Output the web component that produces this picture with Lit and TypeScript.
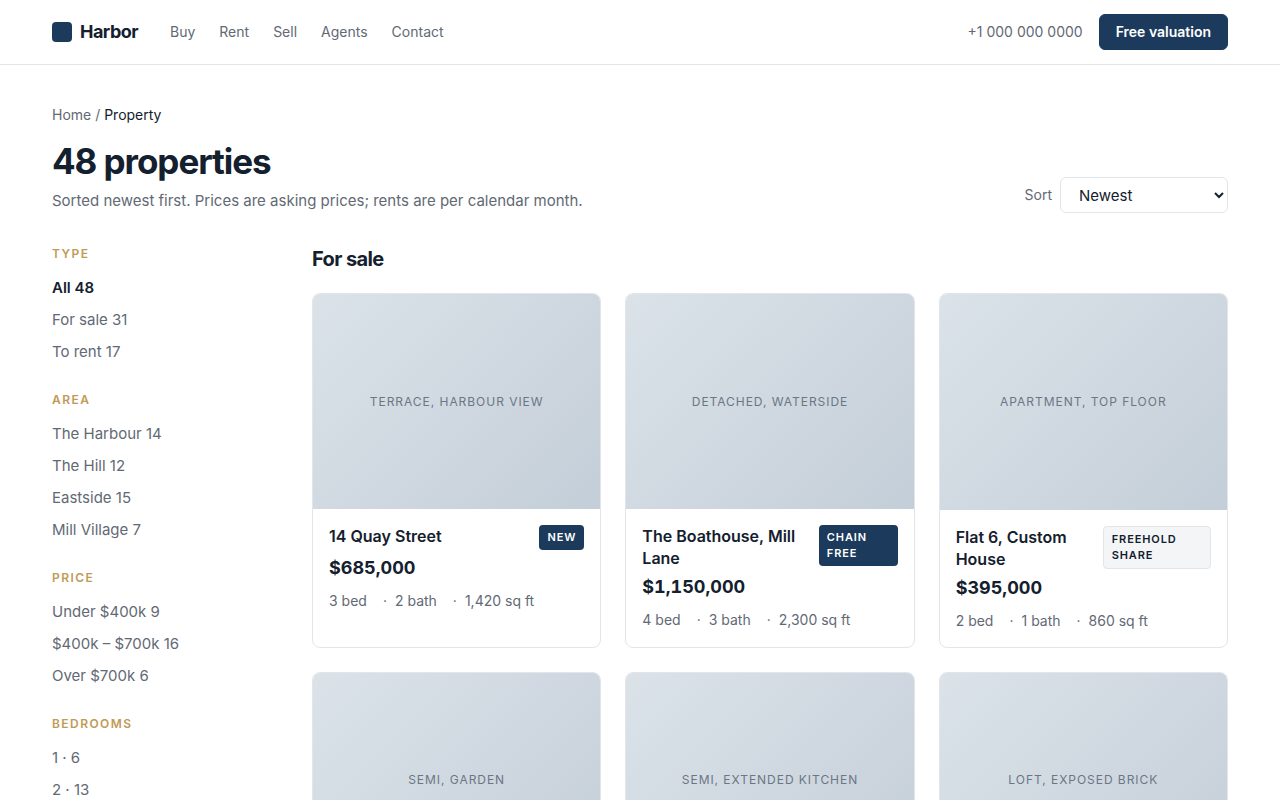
import { LitElement, html, css, nothing } from "lit";
import { customElement, property } from "lit/decorators.js";

interface Listing {
  photo: string;
  title?: string;
  price?: string;
  specs?: string[];
  badge?: string;
  quiet?: boolean;
}

const NAV = ["Buy", "Rent", "Sell", "Agents", "Contact"];

const FILTERS = [
  { name: "Type", items: ["All 48", "For sale 31", "To rent 17"], active: 0 },
  { name: "Area", items: ["The Harbour 14", "The Hill 12", "Eastside 15", "Mill Village 7"], active: -1 },
  { name: "Price", items: ["Under $400k 9", "$400k – $700k 16", "Over $700k 6"], active: -1 },
  { name: "Bedrooms", items: ["1 · 6", "2 · 13"], active: -1 },
];

const LISTINGS: Listing[] = [
  { photo: "Terrace, harbour view", title: "14 Quay Street", price: "$685,000", specs: ["3 bed", "2 bath", "1,420 sq ft"], badge: "New" },
  { photo: "Detached, waterside", title: "The Boathouse, Mill Lane", price: "$1,150,000", specs: ["4 bed", "3 bath", "2,300 sq ft"], badge: "Chain free" },
  { photo: "Apartment, top floor", title: "Flat 6, Custom House", price: "$395,000", specs: ["2 bed", "1 bath", "860 sq ft"], badge: "Freehold share", quiet: true },
  { photo: "Semi, garden" },
  { photo: "Semi, extended kitchen" },
  { photo: "Loft, exposed brick" },
];

@customElement("listing-card")
export class ListingCard extends LitElement {
  @property({ attribute: false }) listing!: Listing;

  static styles = css`
    :host {
      display: flex;
      flex-direction: column;
      overflow: hidden;
      border: 1px solid #e2e5e9;
      border-radius: 8px;
      background: #fff;
    }
    .photo {
      display: grid;
      place-items: center;
      aspect-ratio: 4 / 3;
      background: linear-gradient(135deg, #dbe3e9, #c4ced8);
      color: #6b7684;
      font-size: 12px;
      line-height: 18px;
      letter-spacing: 0.08em;
      text-transform: uppercase;
    }
    .body {
      padding: 16px;
    }
    .top {
      display: flex;
      justify-content: space-between;
      align-items: flex-start;
      gap: 12px;
    }
    .title {
      margin: 0;
      font-size: 16px;
      line-height: 22px;
      font-weight: 600;
    }
    .badge {
      padding: 4px 8px 5px;
      border-radius: 4px;
      background: #1b3a5c;
      color: #fff;
      font-size: 11px;
      line-height: 16px;
      font-weight: 600;
      letter-spacing: 0.08em;
      text-transform: uppercase;
    }
    .quiet {
      border: 1px solid #e2e5e9;
      background: #f3f5f7;
      color: #14202e;
    }
    .price {
      margin: 4px 0 0;
      font-size: 18px;
      line-height: 28px;
      font-weight: 700;
      font-variant-numeric: tabular-nums;
    }
    .specs {
      display: flex;
      gap: 16px;
      margin: 8px 0 0;
      padding: 0;
      list-style: none;
      color: #626974;
      font-size: 14px;
      line-height: 21px;
    }
    .spec + .spec::before {
      content: "·";
      margin-right: 8px;
    }
  `;

  render() {
    const l = this.listing;
    return html`
      <div class="photo">${l.photo}</div>
      ${l.title
        ? html`<div class="body">
            <div class="top">
              <h3 class="title">${l.title}</h3>
              <span class="badge ${l.quiet ? "quiet" : ""}">${l.badge}</span>
            </div>
            <p class="price">${l.price}</p>
            <ul class="specs">
              ${l.specs?.map((s) => html`<li class="spec">${s}</li>`)}
            </ul>
          </div>`
        : nothing}
    `;
  }
}

@customElement("app-root")
export class AppRoot extends LitElement {
  static styles = css`
    :host {
      display: block;
      min-height: 100vh;
      background: #fff;
      color: #14202e;
      font-family: Inter, "Liberation Sans", sans-serif;
      font-size: 15px;
      line-height: 24px;
    }
    a {
      color: inherit;
      text-decoration: none;
    }
    .header {
      border-bottom: 1px solid #e2e5e9;
    }
    .wrap {
      box-sizing: border-box;
      max-width: 1240px;
      margin: 0 auto;
      padding: 0 32px;
    }
    .bar {
      display: flex;
      align-items: center;
      gap: 32px;
      min-height: 64px;
    }
    .brand {
      display: flex;
      align-items: center;
      gap: 8px;
      font-size: 18px;
      font-weight: 700;
      letter-spacing: -0.03em;
    }
    .mark {
      width: 20px;
      height: 20px;
      border-radius: 4px;
      background: #1b3a5c;
    }
    .nav {
      display: flex;
      gap: 24px;
      color: #626974;
      font-size: 14px;
    }
    .actions {
      display: flex;
      align-items: center;
      gap: 16px;
      margin-left: auto;
      color: #626974;
      font-size: 14px;
    }
    .cta {
      height: 36px;
      padding: 0 16px;
      border: 1px solid #1b3a5c;
      border-radius: 6px;
      background: #1b3a5c;
      color: #fff;
      font: inherit;
      font-weight: 600;
    }
    .page {
      padding-top: 40px;
      padding-bottom: 40px;
    }
    .crumbs {
      color: #626974;
      font-size: 14px;
      line-height: 20px;
    }
    .here {
      color: #14202e;
    }
    .intro {
      display: flex;
      justify-content: space-between;
      align-items: flex-end;
      gap: 24px;
      margin-top: 16px;
    }
    .heading {
      margin: 0;
      font-size: 35px;
      line-height: 40px;
      font-weight: 700;
      letter-spacing: -0.03em;
    }
    .lead {
      margin: 8px 0 0;
      color: #626974;
    }
    .sort {
      display: flex;
      align-items: center;
      gap: 8px;
      color: #626974;
      font-size: 14px;
    }
    .select {
      width: 168px;
      height: 36px;
      padding: 0 14px;
      border: 1px solid #e2e5e9;
      border-radius: 6px;
      background: #fff;
      color: #14202e;
      font-family: inherit;
      font-size: 15px;
    }
    .columns {
      display: grid;
      grid-template-columns: 220px minmax(0, 1fr);
      gap: 40px;
      margin-top: 32px;
    }
    .filters {
      display: flex;
      flex-direction: column;
      gap: 27px;
    }
    .label {
      margin: 0 0 13px;
      color: #c19a56;
      font-size: 12px;
      line-height: 18px;
      font-weight: 600;
      letter-spacing: 0.12em;
      text-transform: uppercase;
    }
    .options {
      display: grid;
      gap: 8px;
      margin: 0;
      padding: 0;
      list-style: none;
      color: #626974;
      font-size: 15px;
    }
    .active {
      color: #14202e;
      font-weight: 600;
    }
    .section {
      margin: 0 0 20px;
      font-size: 20px;
      line-height: 28px;
      font-weight: 700;
      letter-spacing: -0.03em;
    }
    .cards {
      display: grid;
      grid-template-columns: repeat(3, minmax(0, 1fr));
      gap: 24px;
    }
  `;

  render() {
    return html`
      <header class="header">
        <div class="wrap bar">
          <a class="brand" href="#"><span class="mark"></span>Harbor</a>
          <nav class="nav">${NAV.map((n) => html`<a href="#">${n}</a>`)}</nav>
          <div class="actions">
            <span>+1 000 000 0000</span>
            <button class="cta" type="button">Free valuation</button>
          </div>
        </div>
      </header>
      <main class="wrap page">
        <nav class="crumbs"><a href="#">Home</a> / <span class="here">Property</span></nav>
        <div class="intro">
          <div>
            <h1 class="heading">48 properties</h1>
            <p class="lead">Sorted newest first. Prices are asking prices; rents are per calendar month.</p>
          </div>
          <div class="sort">
            <label for="sort">Sort</label>
            <select class="select" id="sort">
              <option>Newest</option>
            </select>
          </div>
        </div>
        <div class="columns">
          <aside class="filters">
            ${FILTERS.map(
              (f) => html`<section>
                <h2 class="label">${f.name}</h2>
                <ul class="options">
                  ${f.items.map((t, i) => html`<li><a class=${i === f.active ? "active" : ""} href="#">${t}</a></li>`)}
                </ul>
              </section>`
            )}
          </aside>
          <section>
            <h2 class="section">For sale</h2>
            <div class="cards">
              ${LISTINGS.map((l) => html`<listing-card .listing=${l}></listing-card>`)}
            </div>
          </section>
        </div>
      </main>
    `;
  }
}
